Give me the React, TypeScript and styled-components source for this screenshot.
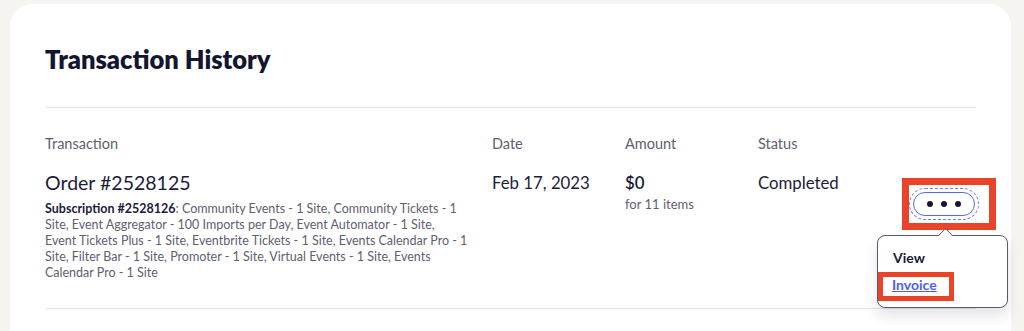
import React from 'react';
import styled, { createGlobalStyle } from 'styled-components';

const GlobalStyle = createGlobalStyle`
  html, body {
    margin: 0;
    padding: 0;
    background: #f6f4f0;
  }
  body {
    font-family: 'Lato', 'Noto Sans', sans-serif;
    color: #1b1c3a;
    -webkit-font-smoothing: antialiased;
  }
`;

const Page = styled.div`
  padding: 4px 13px 0 10px;
  height: 331px;
  box-sizing: border-box;
  overflow: hidden;
`;

const Card = styled.section`
  background: #fff;
  border-radius: 22px 22px 0 0;
  padding: 40px 35px 40px 35px;
  min-height: 400px;
`;

const Title = styled.h2`
  margin: 0;
  font-size: 25.5px;
  line-height: 30px;
  font-weight: 800;
  color: #14152e;
`;

const Divider = styled.hr<{ $top?: number }>`
  border: 0;
  border-top: 1px solid #e1e5e8;
  margin: ${(p) => p.$top ?? 0}px 0 0;
`;

const Grid = styled.div`
  display: grid;
  grid-template-columns: 447px 133px 133px 144px 74px;
`;

const HeadRow = styled(Grid)`
  padding-top: 27px;
`;

const HeadCell = styled.div`
  font-size: 14.5px;
  line-height: 18px;
  color: #5e6070;
`;

const Row = styled(Grid)`
  padding-top: 18px;
  padding-bottom: 27px;
`;

const Cell = styled.div`
  position: relative;
`;

const OrderTitle = styled.div`
  font-size: 19.5px;
  line-height: 24px;
  color: #1b1c3a;
`;

const Value = styled.div<{ $bold?: boolean }>`
  font-size: 16.8px;
  line-height: 24px;
  font-weight: ${(p) => (p.$bold ? 600 : 400)};
  color: #1b1c3a;
`;

const Sub = styled.div`
  font-size: 13px;
  line-height: 18px;
  color: #5e6070;
`;

const Items = styled.p`
  margin: 6px 0 0;
  max-width: 440px;
  font-size: 12.5px;
  line-height: 16px;
  color: #5e6070;
  strong {
    font-weight: 700;
    color: #1b1c3a;
  }
`;

const Highlight = styled.div<{ $w: number; $h: number; $t: number }>`
  box-sizing: border-box;
  width: ${(p) => p.$w}px;
  height: ${(p) => p.$h}px;
  border: ${(p) => p.$t}px solid #e9432a;
  display: flex;
  align-items: center;
`;

const ButtonSlot = styled.div`
  margin-top: 7px;
`;

const MoreButton = styled.button`
  box-sizing: border-box;
  width: 62px;
  height: 24px;
  margin-left: 4px;
  border: 1.5px solid #5668f0;
  border-radius: 12px;
  background: #fff;
  outline: 1px dashed #6a7bf5;
  outline-offset: 3px;
  display: flex;
  align-items: center;
  justify-content: center;
  gap: 8px;
  padding: 0;
`;

const Dot = styled.span`
  width: 6px;
  height: 6px;
  border-radius: 50%;
  background: #16172f;
`;

const Popover = styled.div`
  position: absolute;
  top: 64px;
  left: -25px;
  width: 131px;
  box-sizing: border-box;
  background: #fff;
  border: 1.5px solid #565a70;
  border-radius: 8px;
  box-shadow: 0 8px 14px rgba(30, 30, 60, 0.12);
  padding: 13px 0 6px 0;
  &::before {
    content: '';
    position: absolute;
    top: -6px;
    left: 62px;
    width: 10px;
    height: 10px;
    background: #fff;
    border-left: 1.5px solid #565a70;
    border-top: 1.5px solid #565a70;
    transform: rotate(45deg);
    border-top-left-radius: 2px;
  }
`;

const MenuLabel = styled.div`
  padding-left: 15px;
  font-size: 14px;
  line-height: 18px;
  font-weight: 700;
  color: #1b1c3a;
`;

const MenuItem = styled.div`
  margin-top: 5px;
`;

const MenuLink = styled.a`
  font-size: 14px;
  line-height: 16px;
  font-weight: 700;
  color: #4d5ef5;
  text-decoration: underline;
  padding-left: 9px;
  margin-top: -3px;
`;

const itemLines = [
  'Community Events - 1 Site, Community Tickets - 1',
  'Site, Event Aggregator - 100 Imports per Day, Event Automator - 1 Site,',
  'Event Tickets Plus - 1 Site, Eventbrite Tickets - 1 Site, Events Calendar Pro - 1',
  'Site, Filter Bar - 1 Site, Promoter - 1 Site, Virtual Events - 1 Site, Events',
  'Calendar Pro - 1 Site',
];

export default function App() {
  return (
    <>
      <GlobalStyle />
      <Page>
        <Card>
          <Title>Transaction History</Title>
          <Divider $top={33} />
          <HeadRow>
            <HeadCell>Transaction</HeadCell>
            <HeadCell>Date</HeadCell>
            <HeadCell>Amount</HeadCell>
            <HeadCell>Status</HeadCell>
            <HeadCell />
          </HeadRow>
          <Row>
            <Cell>
              <OrderTitle>Order #2528125</OrderTitle>
              <Items>
                <strong>Subscription #2528126</strong>:{' '}
                {itemLines.map((line, i) => (
                  <React.Fragment key={i}>
                    {i > 0 && <br />}
                    {line}
                  </React.Fragment>
                ))}
              </Items>
            </Cell>
            <Cell>
              <Value>Feb 17, 2023</Value>
            </Cell>
            <Cell>
              <Value $bold>$0</Value>
              <Sub>for 11 items</Sub>
            </Cell>
            <Cell>
              <Value>Completed</Value>
            </Cell>
            <Cell>
              <ButtonSlot>
                <Highlight $w={94} $h={52} $t={7}>
                  <MoreButton aria-label="More actions">
                    <Dot />
                    <Dot />
                    <Dot />
                  </MoreButton>
                </Highlight>
              </ButtonSlot>
              <Popover>
                <MenuLabel>View</MenuLabel>
                <MenuItem>
                  <Highlight $w={76} $h={29} $t={5}>
                    <MenuLink href="#">Invoice</MenuLink>
                  </Highlight>
                </MenuItem>
              </Popover>
            </Cell>
          </Row>
          <Divider />
        </Card>
      </Page>
    </>
  );
}
